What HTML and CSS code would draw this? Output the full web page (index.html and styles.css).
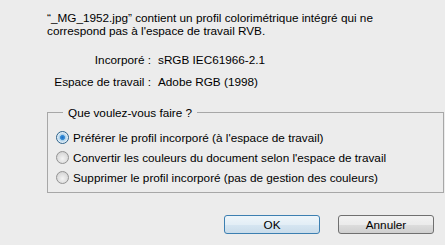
FILE: index.html
```html
<!DOCTYPE html>
<html lang="fr">
<head>
    <meta charset="UTF-8">
    <title>Profil incorporé non concordant</title>
    <link rel="stylesheet" href="styles.css">
</head>
<body>

<div class="dialog">
    <p class="message">“_MG_1952.jpg” contient un profil colorimétrique intégré qui ne<br>correspond pas à l'espace de travail RVB.</p>

    <div class="profiles">
        <span class="label">Incorporé :</span>
        <span class="value">sRGB IEC61966-2.1</span>
        <span class="label">Espace de travail :</span>
        <span class="value">Adobe RGB (1998)</span>
    </div>

    <fieldset class="choices">
        <legend>Que voulez-vous faire ?</legend>
        <label class="option"><input type="radio" name="action" checked> Préférer le profil incorporé (à l'espace de travail)</label>
        <label class="option"><input type="radio" name="action"> Convertir les couleurs du document selon l'espace de travail</label>
        <label class="option"><input type="radio" name="action"> Supprimer le profil incorporé (pas de gestion des couleurs)</label>
    </fieldset>

    <div class="buttons">
        <button class="button default">OK</button>
        <button class="button">Annuler</button>
    </div>
</div>

</body>
</html>
```

FILE: styles.css
```css
body {
    margin: 0;
    background-color: #ececec;
    font-family: "Liberation Sans", Arial, sans-serif;
    font-size: 11.75px;
    color: #000;
}
.dialog {
    width: 445px;
    height: 245px;
    padding: 11px 0 0 47px;
    box-sizing: border-box;
}
.message {
    margin: 0;
    line-height: 13px;
}
.profiles {
    display: grid;
    grid-template-columns: 104px auto;
    column-gap: 7px;
    row-gap: 9px;
    line-height: 13px;
    margin-top: 16px;
}
.profiles .label {
    text-align: right;
}
.choices {
    margin: 18px 0 0 0;
    padding: 8px 0 5px 8px;
    width: 387px;
    border: 1px solid #a7a7a7;
    display: flex;
    flex-direction: column;
}
.choices legend {
    margin-left: 7px;
    padding: 0 5px;
    line-height: 13px;
}
.option {
    display: flex;
    align-items: center;
    height: 20px;
    gap: 4px;
}
.option input {
    appearance: none;
    margin: 0;
    width: 13px;
    height: 13px;
    border: 1px solid #939393;
    border-radius: 50%;
    box-sizing: border-box;
    background: radial-gradient(circle at 50% 60%, #f4f4f4 0%, #dcdcdc 60%, #c8c8c8 100%);
}
.option input:checked {
    border-color: #2c628b;
    background: radial-gradient(circle, #1c6ec6 0%, #3a8fd6 28%, #a8cde8 36%, #e9f3fa 70%, #cfd7df 100%);
}
.buttons {
    display: flex;
    justify-content: flex-end;
    gap: 18px;
    margin-top: 22px;
    padding-right: 11px;
}
.button {
    width: 96px;
    height: 19px;
    padding: 0;
    font-family: inherit;
    font-size: 11.75px;
    color: #000;
    border: 1px solid #707070;
    border-radius: 3px;
    background: linear-gradient(#f2f2f2 0%, #ebebeb 50%, #dddddd 51%, #cfcfcf 100%);
}
.button.default {
    border-color: #3c7fb1;
    background: linear-gradient(#eef5fa 0%, #e3eef6 50%, #d6e6f2 51%, #cadcea 100%);
}
```
